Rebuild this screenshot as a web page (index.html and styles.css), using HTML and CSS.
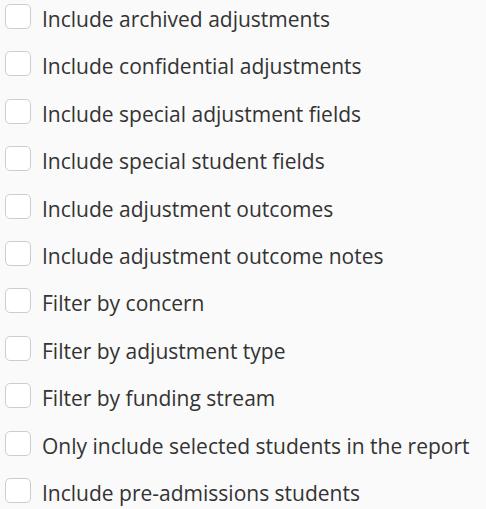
FILE: index.html
```html
<!DOCTYPE html>
<html>
<head>
<meta charset="utf-8">
<link rel="stylesheet" href="styles.css">
</head>
<body>
<ul class="options">
  <li class="option"><span class="box"></span><span class="label">Include archived adjustments</span></li>
  <li class="option"><span class="box"></span><span class="label">Include confidential adjustments</span></li>
  <li class="option"><span class="box"></span><span class="label">Include special adjustment fields</span></li>
  <li class="option"><span class="box"></span><span class="label">Include special student fields</span></li>
  <li class="option"><span class="box"></span><span class="label">Include adjustment outcomes</span></li>
  <li class="option"><span class="box"></span><span class="label">Include adjustment outcome notes</span></li>
  <li class="option"><span class="box"></span><span class="label">Filter by concern</span></li>
  <li class="option"><span class="box"></span><span class="label">Filter by adjustment type</span></li>
  <li class="option"><span class="box"></span><span class="label">Filter by funding stream</span></li>
  <li class="option"><span class="box"></span><span class="label">Only include selected students in the report</span></li>
  <li class="option"><span class="box"></span><span class="label">Include pre-admissions students</span></li>
</ul>
</body>
</html>
```
FILE: styles.css
```css
html, body {
  margin: 0;
  padding: 0;
  background: #fafafa;
}
body {
  font-family: "Open Sans", sans-serif;
  color: #333;
}
.options {
  list-style: none;
  margin: 0;
  padding: 4px 0 0 5px;
  display: flex;
  flex-direction: column;
  gap: 17.4px;
}
.option {
  display: flex;
  align-items: flex-start;
  gap: 11px;
  height: 30px;
}
.box {
  box-sizing: border-box;
  width: 26px;
  height: 25px;
  border: 1px solid #cdcdcd;
  border-radius: 5px;
  background: #fff;
  flex: none;
}
.label {
  font-size: 21px;
  line-height: 30px;
  white-space: nowrap;
}
```
